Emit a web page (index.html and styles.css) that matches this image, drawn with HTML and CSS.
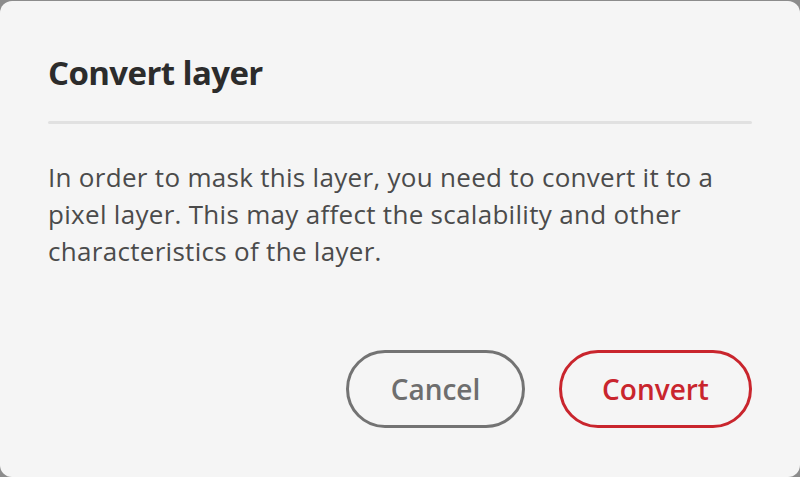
FILE: index.html
```html
<!DOCTYPE html>
<html lang="en">
<head>
<meta charset="utf-8">
<title>Convert layer</title>
<link rel="stylesheet" href="styles.css">
</head>
<body>
<div class="screen">
  <div class="dialog">
    <h1 class="title">Convert layer</h1>
    <div class="divider"></div>
    <p class="message">In order to mask this layer, you need to convert it to a pixel layer. This may affect the scalability and other characteristics of the layer.</p>
    <div class="actions">
      <button class="btn btn-secondary">Cancel</button>
      <button class="btn btn-primary">Convert</button>
    </div>
  </div>
</div>
</body>
</html>
```
FILE: styles.css
```css
html, body {
  margin: 0;
  padding: 0;
  height: 100%;
}
body {
  background: #8c8c8c;
  font-family: "Open Sans", "Noto Sans", sans-serif;
}
.screen {
  height: 477px;
  padding-top: 1px;
  box-sizing: border-box;
  display: flex;
}
.dialog {
  flex: 1;
  background: #f5f5f5;
  border-radius: 12px;
  padding: 0 48px;
  display: flex;
  flex-direction: column;
}
.title {
  margin: 51px 0 0;
  font-size: 33px;
  font-weight: 700;
  color: #2c2c2c;
  line-height: 42px;
  letter-spacing: -0.6px;
}
.divider {
  margin-top: 27px;
  height: 3px;
  background: #e1e1e1;
  border-radius: 2px;
}
.message {
  margin: 35px 0 0;
  font-size: 26px;
  line-height: 37px;
  color: #4b4b4b;
  letter-spacing: 0.3px;
}
.actions {
  margin-top: 80px;
  display: flex;
  justify-content: flex-end;
  gap: 34px;
}
.btn {
  height: 78px;
  border-radius: 39px;
  border: 3px solid;
  background: transparent;
  font-family: inherit;
  font-size: 28px;
  font-weight: 600;
  padding: 0;
  box-sizing: border-box;
  letter-spacing: 0;
}
.btn-secondary {
  width: 179px;
  border-color: #737373;
  color: #6e6e6e;
}
.btn-primary {
  width: 193px;
  border-color: #c9252d;
  color: #c9252d;
}
```
